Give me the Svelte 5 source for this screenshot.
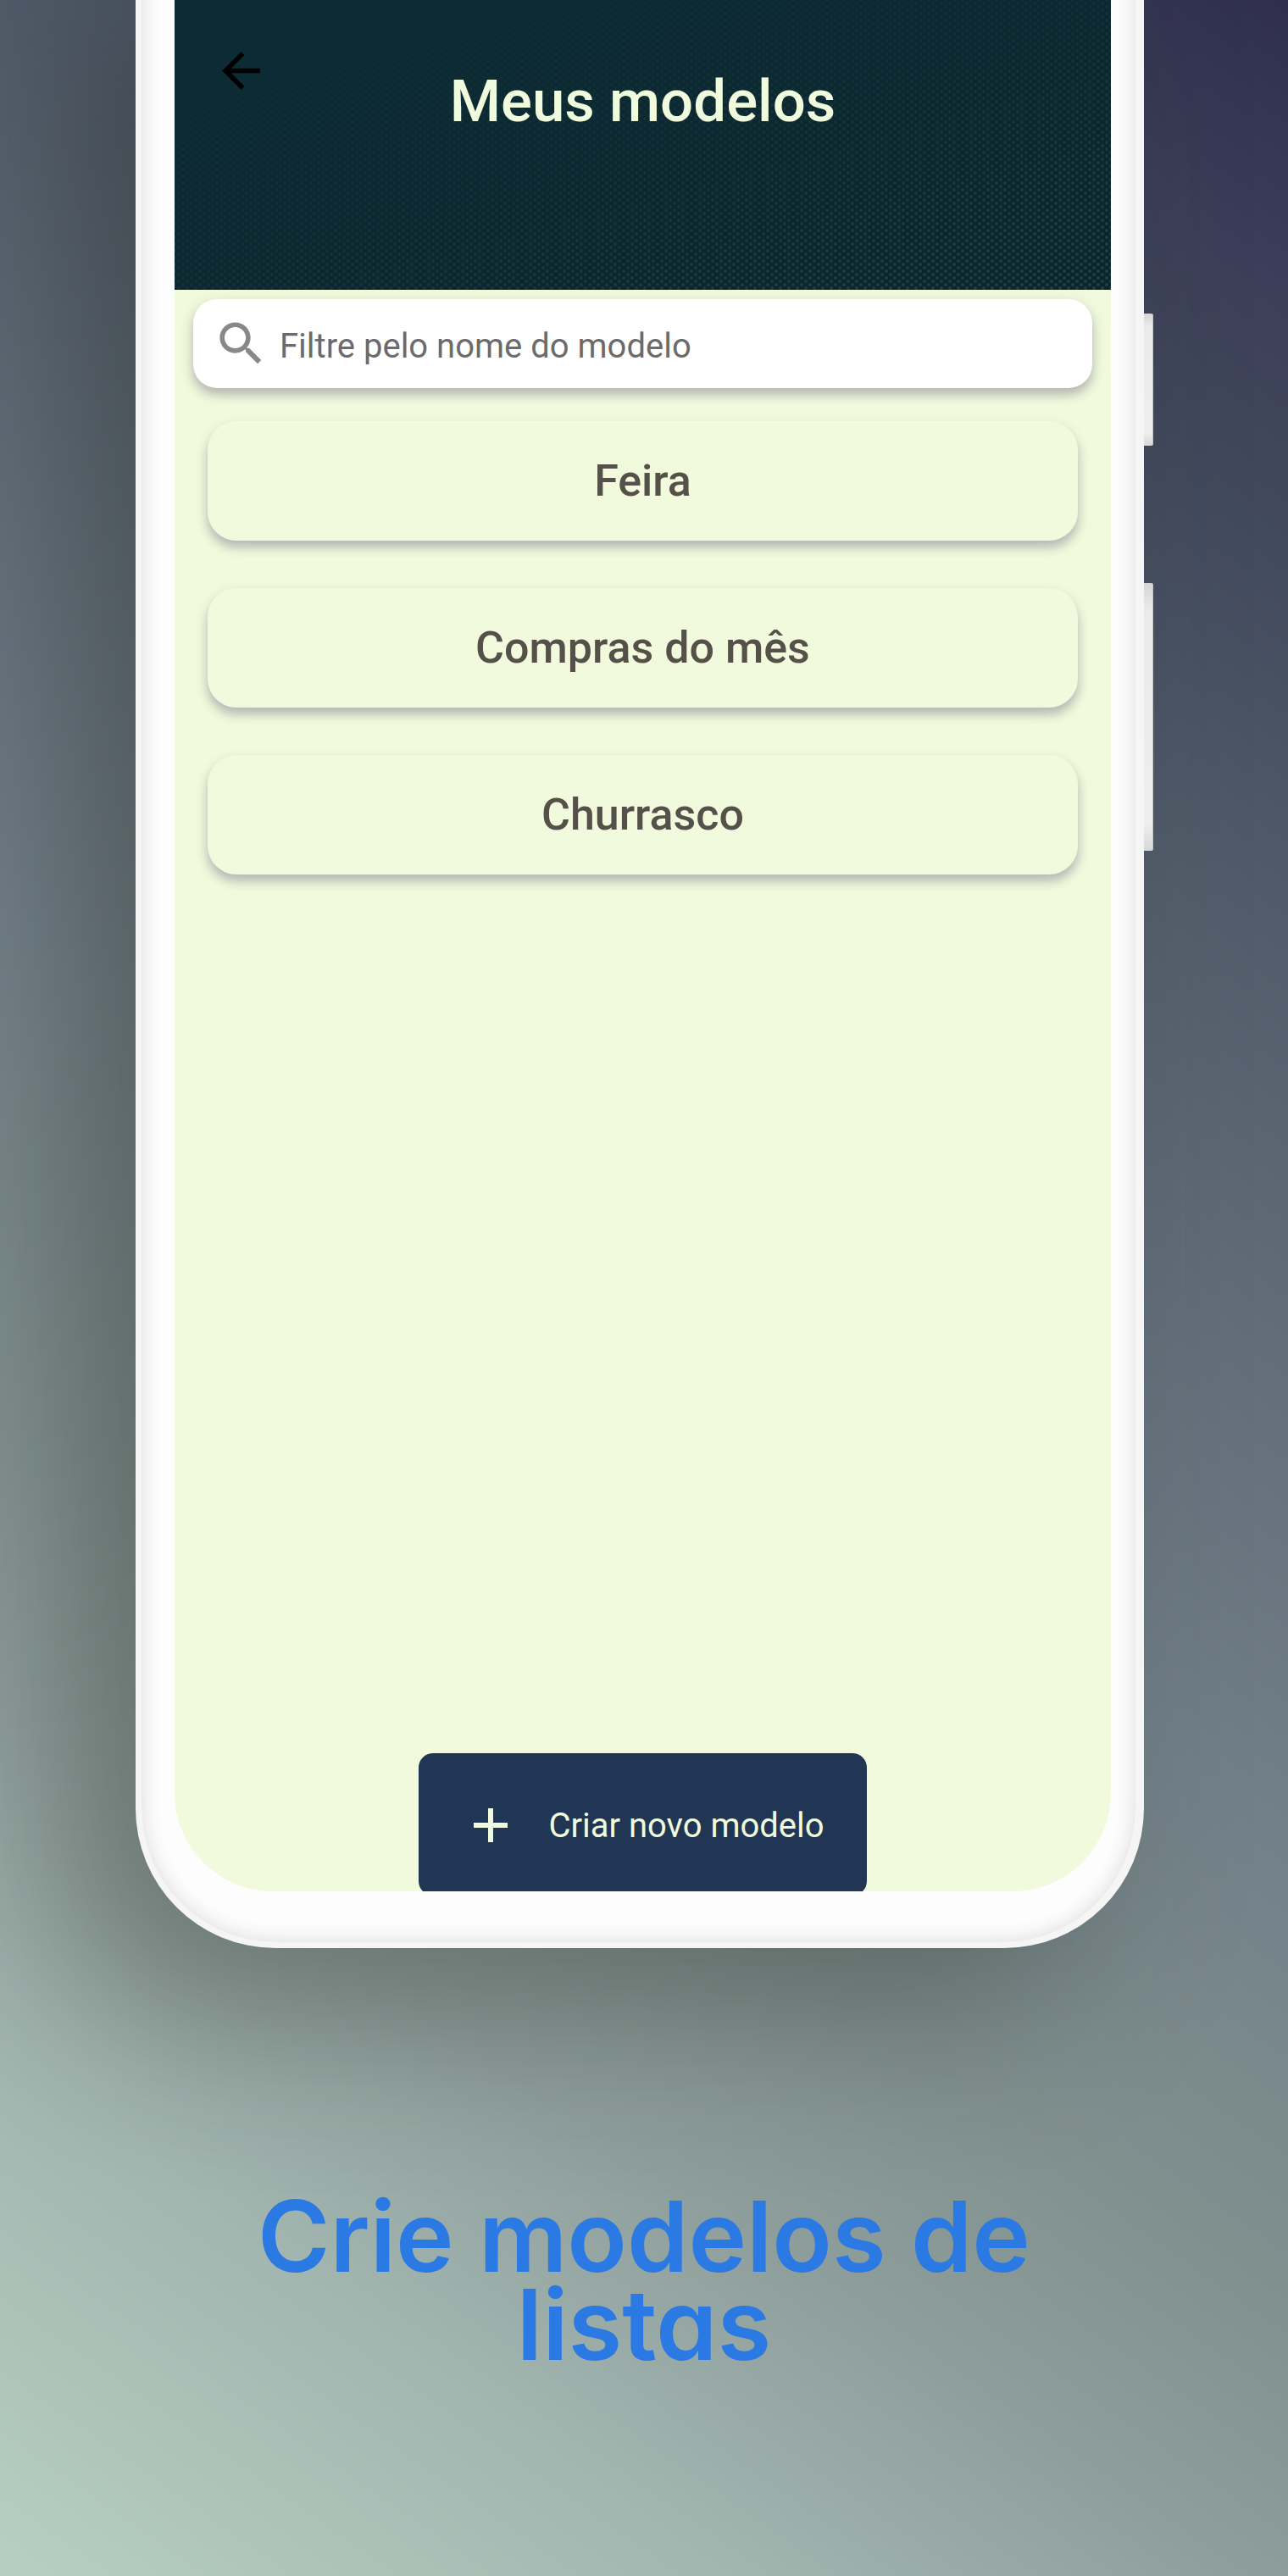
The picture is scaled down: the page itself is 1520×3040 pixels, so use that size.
<script>
  const models = ['Feira', 'Compras do mês', 'Churrasco'];
  let query = $state('');
  let visible = $derived(
    models.filter((name) => name.toLowerCase().includes(query.toLowerCase()))
  );
</script>

<main class="page">
  <section class="phone">
    <span class="side-key power"></span>
    <span class="side-key volume"></span>
    <div class="screen">
      <header class="top">
        <button class="back" aria-label="Voltar">
          <svg viewBox="0 0 24 24" aria-hidden="true">
            <path d="M20 11H7.83l5.59-5.59L12 4l-8 8 8 8 1.41-1.41L7.83 13H20v-2z" />
          </svg>
        </button>
        <h1>Meus modelos</h1>
      </header>

      <div class="content">
        <label class="search">
          <svg viewBox="0 0 24 24" aria-hidden="true">
            <path d="M15.5 14h-.79l-.28-.27C15.41 12.59 16 11.11 16 9.5 16 5.91 13.09 3 9.5 3S3 5.91 3 9.5 5.91 16 9.5 16c1.61 0 3.09-.59 4.23-1.57l.27.28v.79l5 4.99L20.49 19l-4.99-5zm-6 0C7.01 14 5 11.99 5 9.5S7.01 5 9.5 5 14 7.01 14 9.5 11.99 14 9.5 14z" />
          </svg>
          <input
            type="text"
            placeholder="Filtre pelo nome do modelo"
            aria-label="Filtre pelo nome do modelo"
            bind:value={query}
          />
        </label>

        <ul class="models">
          {#each visible as name}
            <li><button class="model">{name}</button></li>
          {/each}
        </ul>

        <button class="create">
          <svg viewBox="0 0 40 40" aria-hidden="true">
            <path d="M17 0h6v17h17v6H23v17h-6V23H0v-6h17z" />
          </svg>
          <span>Criar novo modelo</span>
        </button>
      </div>
    </div>
  </section>

  <h2 class="caption">Crie modelos de listas</h2>
</main>

<style>
  :global(body) {
    margin: 0;
  }

  .page {
    box-sizing: border-box;
    display: flow-root;
    min-height: 100vh;
    overflow: hidden;
    font-family: Roboto, sans-serif;
    background: linear-gradient(
      35deg,
      #b7cfc2 0%,
      #a2b5af 15%,
      #8e9e9c 25%,
      #80908f 34%,
      #717f88 48%,
      #616d79 61%,
      #535e6c 72%,
      #424a5d 84%,
      #3b3e58 92%,
      #2f2f4d 100%
    );
  }

  button,
  input {
    border: 0;
    padding: 0;
    font: inherit;
    color: inherit;
    background: none;
  }

  svg {
    display: block;
    flex: none;
    fill: currentColor;
  }

  .phone {
    position: relative;
    margin: -60px 170px 0 160px;
    padding: 60px 29px 60px 39px;
    border: solid #f5f5f5;
    border-width: 0 10px 7px 7px;
    border-radius: 0 0 165px 165px;
    background: #fdfdfd;
    box-shadow:
      inset 0 0 24px rgba(0, 0, 0, 0.14),
      -80px 80px 190px rgba(34, 38, 30, 0.34);
  }

  .side-key {
    position: absolute;
    left: calc(100% + 10px);
    width: 11px;
    border-radius: 0 3px 3px 0;
    background: linear-gradient(#d6d6d6, #eaeaea 10%, #eeeeee 90%, #d8d8d8);
    box-shadow: inset -1px 0 #c4c4c8;
  }

  .power {
    top: 430px;
    height: 156px;
  }

  .volume {
    top: 748px;
    height: 316px;
  }

  .screen {
    display: flex;
    flex-direction: column;
    min-height: 2232px;
    overflow: hidden;
    border-radius: 0 0 116px 116px;
    background: #f1fadc;
  }

  .top {
    display: grid;
    grid-template-columns: 67px 1fr 67px;
    align-items: start;
    box-sizing: border-box;
    height: 342px;
    padding: 50px 45px 0;
    color: #f0fadc;
    background:
      linear-gradient(165deg, #0d2b34 15%, rgba(12, 41, 49, 0.6) 55%, rgba(10, 37, 45, 0) 95%),
      radial-gradient(circle, rgba(100, 145, 145, 0.26) 1px, transparent 3px) 0 0 / 10px 8px,
      radial-gradient(circle, rgba(100, 145, 145, 0.26) 1px, transparent 3px) 5px 4px / 10px 8px,
      #09232b;
  }

  .back {
    color: #000;
  }

  .back svg,
  .search svg {
    width: 67px;
    height: 67px;
  }

  h1 {
    margin: 30px 0 0;
    font-size: 69px;
    line-height: 80px;
    font-weight: 500;
    text-align: center;
  }

  .content {
    display: flex;
    flex: 1;
    flex-direction: column;
    padding: 11px 22px 0;
  }

  .search {
    display: flex;
    align-items: center;
    gap: 12px;
    height: 105px;
    padding: 0 23px;
    border-radius: 28px;
    color: #888;
    background: #fff;
    box-shadow:
      0 8px 12px rgba(90, 80, 120, 0.32),
      0 4px 18px rgba(90, 80, 110, 0.12);
  }

  .search input {
    flex: 1;
    min-width: 0;
    padding-top: 6px;
    font-size: 40px;
    line-height: 48px;
    color: #666;
    outline: 0;
  }

  .search input::placeholder {
    color: #6b6b6b;
    opacity: 1;
  }

  .models {
    display: flex;
    flex-direction: column;
    gap: 56px;
    margin: 39px 17px 0;
    padding: 0;
    list-style: none;
  }

  .model {
    display: block;
    width: 100%;
    height: 141px;
    border-radius: 34px;
    font-size: 52px;
    font-weight: 500;
    color: #55514a;
    background: #f1fadc;
    box-shadow:
      0 8px 12px rgba(90, 80, 120, 0.32),
      0 6px 16px rgba(90, 80, 110, 0.1);
  }

  .create {
    display: flex;
    align-items: center;
    align-self: center;
    gap: 48px;
    height: 168px;
    margin: auto 0 -5px;
    padding: 2px 50px 0 65px;
    border-radius: 17px;
    font-size: 40px;
    color: #f0fadc;
    background: #213654;
  }

  .create svg {
    width: 40px;
    height: 40px;
  }

  .caption {
    max-width: 1100px;
    margin: 288px auto 0;
    font-family: Inter, sans-serif;
    font-size: 116px;
    line-height: 104px;
    font-weight: 600;
    font-feature-settings: 'cv11';
    text-align: center;
    color: #2b79e2;
  }
</style>
